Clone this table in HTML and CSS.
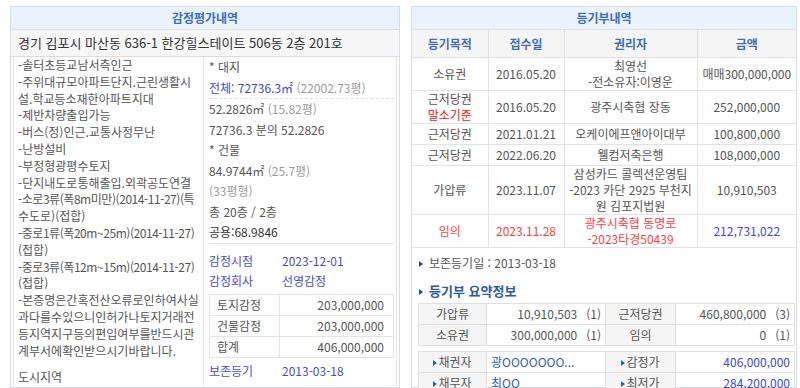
FILE: index.html
```html
<!DOCTYPE html>
<html lang="ko">
<head>
<meta charset="utf-8">
<title>감정평가내역 / 등기부내역</title>
<link rel="stylesheet" href="styles.css">
</head>
<body>
<div class="page">
  <section class="panel panel-left">
    <h2 class="panel-title">감정평가내역</h2>
    <div class="address">경기 김포시 마산동 636-1 한강힐스테이트 506동 2층 201호</div>
    <div class="detail">
      <div class="desc">
        <div>-솔터초등교남서측인근</div>
        <div>-주위대규모아파트단지.근린생활시</div>
        <div>설.학교등소재한아파트지대</div>
        <div>-제반차량출입가능</div>
        <div>-버스(정)인근.교통사정무난</div>
        <div>-난방설비</div>
        <div>-부정형광평수토지</div>
        <div>-단지내도로통해출입.외곽공도연결</div>
        <div class="tight">-소로3류(폭8m미만)(2014-11-27)(특</div>
        <div>수도로)(접합)</div>
        <div class="tight">-중로1류(폭20m~25m)(2014-11-27)</div>
        <div>(접합)</div>
        <div class="tight">-중로3류(폭12m~15m)(2014-11-27)</div>
        <div>(접합)</div>
        <div>-본증명은간혹전산오류로인하여사실</div>
        <div>과다를수있으니인허가나토지거래전</div>
        <div>등지역지구등의편입여부를반드시관</div>
        <div>계부서에확인받으시기바랍니다.</div>
        <div class="zone">도시지역</div>
      </div>
      <div class="facts">
        <div class="line">* 대지</div>
        <div class="line"><span class="blue">전체: 72736.3㎡</span> <span class="muted">(22002.73평)</span></div>
        <div class="line dashed">52.2826㎡ <span class="muted">(15.82평)</span></div>
        <div class="line">72736.3 분의 52.2826</div>
        <div class="line">* 건물</div>
        <div class="line">84.9744㎡ <span class="muted">(25.7평)</span></div>
        <div class="line muted">(33평형)</div>
        <div class="line">총 20층 / 2층</div>
        <div class="line strong">공용:68.9846</div>
        <div class="info first"><span class="label">감정시점</span><span class="value">2023-12-01</span></div>
        <div class="info"><span class="label">감정회사</span><span class="value">선영감정</span></div>
        <table class="appraisal">
          <tr><th>토지감정</th><td>203,000,000</td></tr>
          <tr><th>건물감정</th><td>203,000,000</td></tr>
          <tr><th>합계</th><td>406,000,000</td></tr>
        </table>
        <div class="info last"><span class="label">보존등기</span><span class="value">2013-03-18</span></div>
      </div>
    </div>
  </section>

  <section class="panel panel-right">
    <h2 class="panel-title">등기부내역</h2>
    <table class="reg">
      <colgroup><col class="c1"><col class="c2"><col class="c3"><col class="c4"></colgroup>
      <thead>
        <tr><th>등기목적</th><th>접수일</th><th>권리자</th><th>금액</th></tr>
      </thead>
      <tbody>
        <tr><td>소유권</td><td>2016.05.20</td><td>최영선<br>-전소유자:이영운</td><td>매매300,000,000</td></tr>
        <tr><td>근저당권<br><span class="red">말소기준</span></td><td>2016.05.20</td><td>광주시축협 장동</td><td>252,000,000</td></tr>
        <tr><td>근저당권</td><td>2021.01.21</td><td>오케이에프앤아이대부</td><td>100,800,000</td></tr>
        <tr><td>근저당권</td><td>2022.06.20</td><td>웰컴저축은행</td><td>108,000,000</td></tr>
        <tr><td>가압류</td><td>2023.11.07</td><td>삼성카드 콜렉션운영팀<br>-2023 카단 2925 부천지<br>원 김포지법원</td><td>10,910,503</td></tr>
        <tr class="alert"><td>임의</td><td>2023.11.28</td><td>광주시축협 동명로<br>-2023타경50439</td><td class="amount-blue">212,731,022</td></tr>
      </tbody>
    </table>
    <p class="note"><span class="tri"></span>보존등기일 : 2013-03-18</p>
    <h3 class="sum-title"><span class="tri"></span>등기부 요약정보</h3>
    <table class="sum">
      <colgroup><col class="s1"><col class="s2"><col class="s3"><col class="s4"></colgroup>
      <tr><th>가압류</th><td>10,910,503<span class="cnt">(1)</span></td><th>근저당권</th><td>460,800,000<span class="cnt">(3)</span></td></tr>
      <tr><th>소유권</th><td>300,000,000<span class="cnt">(1)</span></td><th>임의</th><td>0<span class="cnt">(1)</span></td></tr>
    </table>
    <table class="sum sum-2">
      <colgroup><col class="s1"><col class="s2"><col class="s3"><col class="s4"></colgroup>
      <tr><th><span class="tri small"></span>채권자</th><td class="link">광OOOOOOO...</td><th><span class="tri small"></span>감정가</th><td class="blue-num">406,000,000</td></tr>
      <tr><th><span class="tri small"></span>채무자</th><td class="link">최OO</td><th><span class="tri small"></span>최저가</th><td class="blue-num">284,200,000</td></tr>
    </table>
  </section>
</div>
</body>
</html>
```

FILE: styles.css
```css
* { box-sizing: border-box; }

html, body {
  margin: 0;
  padding: 0;
  background: #fff;
}

body {
  font-family: "Noto Sans CJK KR", "Noto Sans", sans-serif;
  font-size: 12px;
  color: #555;
}

.page {
  display: flex;
  gap: 11px;
  padding: 6px 0 0 10px;
  height: 388px;
  overflow: hidden;
}

.panel {
  border: 1px solid #d6dde7;
  flex: none;
}

.panel-left { width: 390px; }
.panel-right { width: 386px; }

.panel-title {
  margin: 0;
  height: 23px;
  line-height: 22px;
  background: #eaf2fc;
  border-bottom: 1px solid #d9e1eb;
  text-align: center;
  font-size: 12px;
  font-weight: bold;
  color: #3f6db3;
}

/* left panel */
.address {
  height: 27px;
  line-height: 25px;
  padding-left: 7px;
  background: #f7f7f7;
  border-bottom: 1px solid #dcdcdc;
  font-size: 13px;
  color: #333;
  white-space: nowrap;
}

.detail {
  display: flex;
  margin: 0 2px;
  border-left: 1px solid #e6e6e6;
}

.desc {
  width: 190px;
  padding-left: 4px;
  border-right: 1px solid #e6e6e6;
  line-height: 16.8px;
  white-space: nowrap;
  overflow: hidden;
}

.desc .tight { letter-spacing: -0.45px; }
.desc .zone { margin-top: 10px; }

.facts {
  width: 193px;
  padding: 0 2px 0 5px;
  border-right: 1px solid #e6e6e6;
}

.facts .line {
  line-height: 20.5px;
  white-space: nowrap;
}

.facts .dashed { border-top: 1px dashed #dedede; }
.facts .strong { color: #333; border-bottom: 1px solid #e2e2e2; }

.blue { color: #4346bf; }
.muted { color: #9a9a9a; }

.info {
  display: flex;
  line-height: 20.5px;
  color: #4a4dcb;
}
.info.first { margin-top: 7px; }
.info.last { margin-top: 3px; }
.info .label { width: 73px; }

.appraisal {
  width: 100%;
  margin-top: 2px;
  border-collapse: collapse;
}
.appraisal th, .appraisal td {
  height: 21px;
  padding: 0 7px;
  border: 1px solid #e4e4e4;
  font-weight: normal;
  line-height: 19px;
}
.appraisal th { width: 70px; text-align: left; }
.appraisal td { text-align: right; padding-right: 9px; }

/* right panel */
.reg {
  width: 100%;
  border-collapse: collapse;
  table-layout: fixed;
}
.reg .c1 { width: 76px; }
.reg .c2 { width: 76px; }
.reg .c3 { width: 133px; }

.reg th, .reg td {
  border: 1px solid #e2e2e2;
  text-align: center;
  padding: 0 2px;
  white-space: nowrap;
}
.reg tr > :first-child { border-left: none; }
.reg tr > :last-child { border-right: none; }

.reg th {
  height: 27px;
  background: #f5f5f5;
  color: #3f6db3;
  font-weight: bold;
  font-size: 12px;
}
.reg thead th { border-top: none; }

.reg td {
  height: 21px;
  line-height: 16px;
}

.red { color: #ff1010; }
.reg .alert td { color: #ff4040; }
.reg .alert td.amount-blue { color: #4343e8; }

.note {
  margin: 7px 0 0 7px;
  line-height: 16px;
}

.tri {
  display: inline-block;
  width: 0;
  height: 0;
  border-left: 4px solid #1f4d8f;
  border-top: 3px solid transparent;
  border-bottom: 3px solid transparent;
  margin-right: 6px;
  vertical-align: 1px;
}
.tri.small {
  margin-right: 1px;
  border-left-color: #2f5ea6;
}

.sum-title {
  margin: 12px 0 0 7px;
  line-height: 16px;
  font-size: 13px;
  font-weight: bold;
  color: #2c5aa0;
}

.sum {
  width: 377px;
  margin: 4px 0 0 6px;
  border-collapse: collapse;
  table-layout: fixed;
}
.sum-2 { margin-top: 5px; }
.sum .s1 { width: 68px; }
.sum .s2 { width: 119px; }
.sum .s3 { width: 70px; }

.sum th, .sum td {
  height: 21px;
  border: 1px solid #e0e0e0;
  line-height: 19px;
  padding: 0 4px;
  white-space: nowrap;
}
.sum th {
  background: #f5f5f5;
  font-weight: normal;
  text-align: center;
}
.sum td { text-align: right; }
.sum .cnt { padding-left: 9px; }
.sum td.link { text-align: left; color: #2f5ea6; }
.sum td.blue-num { color: #4446d0; }
```
